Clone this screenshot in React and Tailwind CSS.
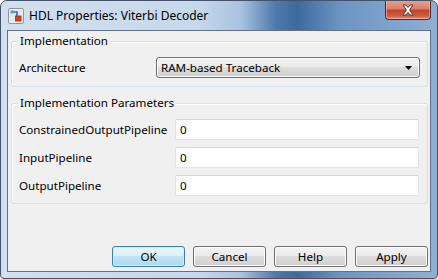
const font = { fontFamily: '"Noto Sans", "Liberation Sans", Arial, sans-serif' };

const GroupBox = ({ title, className = '', children }) => (
    <div className={`border border-[#d5dfe5] rounded-[3px] shadow-[inset_1px_1px_0_#ffffff] ${className}`}>
        <div className="-mt-[8px] ml-[6px] px-[2px] w-fit bg-[#f0f0f0] leading-[14px] text-[11.6px]">
            {title}
        </div>
        {children}
    </div>
);

const TextField = ({ value }) => (
    <div className="w-[244px] h-[21px] bg-white border border-[#e2e3ea] border-t-[#d0d3da] rounded-[2px] flex items-center pl-[4px] text-[11.6px]">
        {value}
    </div>
);

const Button = ({ label, isDefault }) => (
    <div
        className={
            isDefault
                ? 'w-[73px] h-[21px] rounded-[3px] border border-[#3c7fb1] bg-[linear-gradient(#e9f5fc_0%,#dcf0fa_45%,#c2e4f6_50%,#a9d9f2_100%)] shadow-[inset_0_0_0_1px_#cdeffd] flex items-center justify-center text-[11.6px]'
                : 'w-[73px] h-[21px] rounded-[3px] border border-[#707070] bg-[linear-gradient(#f2f2f2_0%,#ebebeb_45%,#dddddd_50%,#cfcfcf_100%)] shadow-[inset_0_0_0_1px_#fcfcfc] flex items-center justify-center text-[11.6px]'
        }
    >
        {label}
    </div>
);

const AppIcon = () => (
    <svg width="16" height="16" viewBox="0 0 16 16">
        <rect x="0.5" y="0.5" width="15" height="15" rx="1.5" fill="#f4f4f4" stroke="#8f969e" />
        <rect x="1.5" y="1.5" width="13" height="13" fill="#e6e6e6" />
        <path d="M3 4 L9 4 L9 8" fill="none" stroke="#2f6fb8" strokeWidth="1.6" />
        <rect x="2.5" y="2.5" width="3" height="3" fill="#5d9be0" />
        <rect x="7.5" y="8" width="5.5" height="5" fill="#d8401f" stroke="#a42a12" strokeWidth="0.8" />
    </svg>
);

const CloseButton = () => (
    <div className="w-[46px] h-[20px] rounded-b-[4px] border border-t-0 border-[#5a2a24] bg-[linear-gradient(#e8a493_0%,#d9806c_45%,#c2432b_55%,#cf5d43_85%,#e79a7e_100%)] shadow-[inset_0_0_0_1px_rgba(255,200,190,0.5)] flex items-center justify-center">
        <svg width="14" height="12" viewBox="0 0 14 12">
            <path
                d="M2 1 L5 1 L7 3.5 L9 1 L12 1 L8.6 6 L12 11 L9 11 L7 8.5 L5 11 L2 11 L5.4 6 Z"
                fill="#ffffff"
                stroke="#4a2a26"
                strokeWidth="0.9"
            />
        </svg>
    </div>
);

export default function App() {
    return (
        <div className="w-[438px] h-[279px] bg-white" style={font}>
            <div className="w-full h-full rounded-t-[7px] rounded-b-[4px] border border-[#44536a] bg-[linear-gradient(to_right,#d2e0ef_0%,#c6d8ec_45%,#a9c3e1_55%,#4d79ab_63%,#3d6a9e_68%,#6d95c3_78%,#8dafd6_100%)] flex flex-col overflow-hidden">
                {/* Title bar */}
                <div className="h-[29px] flex items-start shrink-0">
                    <div className="mt-[7px] ml-[7px]">
                        <AppIcon />
                    </div>
                    <div className="mt-[7px] ml-[5px] text-[12px] leading-[16px] text-black">
                        HDL Properties: Viterbi Decoder
                    </div>
                    <div className="ml-auto mr-[6px] -mt-px">
                        <CloseButton />
                    </div>
                </div>

                {/* Client area */}
                <div className="mx-[6px] h-[242px] border border-[#61718a] bg-[#f0f0f0] text-black flex flex-col">
                    <GroupBox title="Implementation" className="mt-[10px] ml-[3px] mr-[2px]">
                        <div className="mt-[9px] pl-[7px] pr-[7px] pb-[8px] flex items-center text-[11.6px]">
                            <div className="w-[137px]">Architecture</div>
                            <div className="flex-1 h-[21px] rounded-[3px] border border-[#707070] bg-[linear-gradient(#f2f2f2_0%,#ebebeb_45%,#dddddd_50%,#cfcfcf_100%)] shadow-[inset_0_0_0_1px_#fcfcfc] flex items-center pl-[4px] pr-[7px]">
                                <span>RAM-based Traceback</span>
                                <svg className="ml-auto" width="7" height="4" viewBox="0 0 7 4">
                                    <path d="M0 0 L7 0 L3.5 4 Z" fill="#000" />
                                </svg>
                            </div>
                        </div>
                    </GroupBox>

                    <GroupBox title="Implementation Parameters" className="mt-[16px] ml-[3px] mr-[2px]">
                        <div className="mt-[9px] pl-[7px] pr-[7px] pb-[7px] flex flex-col gap-[7px] text-[11.6px]">
                            {['ConstrainedOutputPipeline', 'InputPipeline', 'OutputPipeline'].map((name) => (
                                <div key={name} className="flex items-center">
                                    <div className="w-[156px]">{name}</div>
                                    <TextField value="0" />
                                </div>
                            ))}
                        </div>
                    </GroupBox>

                    <div className="mt-auto mb-[4px] mr-[2px] flex justify-end gap-[8px]">
                        <Button label="OK" isDefault />
                        <Button label="Cancel" />
                        <Button label="Help" />
                        <Button label="Apply" />
                    </div>
                </div>
            </div>
        </div>
    );
}
